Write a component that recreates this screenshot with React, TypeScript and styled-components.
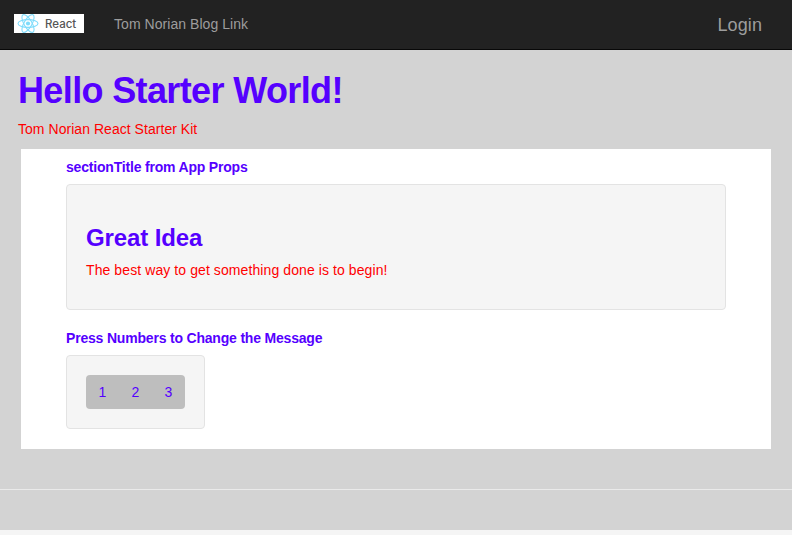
import React from "react";
import styled, { createGlobalStyle } from "styled-components";

const Global = createGlobalStyle`
  html, body { margin: 0; padding: 0; background: #f5f5f5; }
  body { font-family: "Liberation Sans", Arial, sans-serif; }
  * { box-sizing: border-box; }
`;
const Page = styled.div`
  width: 792px; height: 535px; overflow: hidden; display: flex; flex-direction: column;
`;
const Navbar = styled.nav`
  height: 50px; flex: none; background: #222; border-bottom: 1px solid #080808;
  display: flex; align-items: center; padding: 0 30px 2px 14px;
`;
const Logo = styled.div`
  width: 70px; height: 19px; background: #fff; display: flex; align-items: center; gap: 6px; padding-left: 3px;
  color: #555; font-size: 11.5px; font-weight: 500; font-family: "Inter", sans-serif;
`;
const NavLink = styled.a`
  color: #9d9d9d; font-size: 14px; margin-left: 30px; letter-spacing: 0.05px;
`;
const Login = styled.a`
  color: #9d9d9d; font-size: 18px; margin-left: auto; position: relative; top: 2px; letter-spacing: 0.1px;
`;
const Main = styled.main`
  height: 480px; flex: none; background: #d3d3d3; display: flex; flex-direction: column;
`;
const Hero = styled.h1`
  margin: 21px 0 0 18px; font-size: 36px; line-height: 40px; font-weight: 700; color: #5500ff;
  letter-spacing: -0.63px;
`;
const Tag = styled.p`
  margin: 8px 0 0 18px; font-size: 14px; line-height: 20px; color: #ff0000; letter-spacing: 0.04px;
`;
const Panel = styled.section`
  margin: 10px 0 0 21px; width: 750px; height: 300px; background: #fff; padding: 8px 45px 0;
`;
const SectionTitle = styled.h3`
  margin: 0; font-size: 14px; line-height: 20px; font-weight: 700; color: #5500ff;
  letter-spacing: -0.19px;
`;
const Well = styled.div`
  background: #f5f5f5; border: 1px solid #e3e3e3; border-radius: 4px;
`;
const MessageWell = styled(Well)`
  width: 660px; height: 126px; margin-top: 7px; padding: 19px; margin-bottom: 18px;
`;
const MessageTitle = styled.h2`
  margin: 21px 0 0; font-size: 24px; line-height: 26px; font-weight: 700; color: #5500ff;
  letter-spacing: -0.12px;
`;
const Message = styled.p`
  margin: 9px 0 0; font-size: 14px; line-height: 20px; color: #ff0000; letter-spacing: 0.09px;
`;
const ButtonWell = styled(Well)`
  width: 139px; height: 74px; margin-top: 7px; padding: 19px;
`;
const ButtonGroup = styled.div`
  width: 99px; height: 34px; background: #bebebe; border-radius: 4px; display: flex; align-items: center;
`;
const NumberButton = styled.button`
  width: 33px; border: 0; background: none; padding: 0; font: 14px "Liberation Sans", Arial, sans-serif; color: #5500ff;
`;
const Footer = styled.footer`
  margin-top: 40px; border-top: 1px solid #eaeaea; height: 41px; background: #d3d3d3;
`;

const ReactMark = () => (
  <svg width="22" height="19" viewBox="-11 -9.5 22 19" fill="none" stroke="#7fdcfb" strokeWidth="1.1">
    <circle r="2.1" fill="#7fdcfb" stroke="none" />
    <ellipse rx="10" ry="3.9" />
    <ellipse rx="10" ry="3.9" transform="rotate(60)" />
    <ellipse rx="10" ry="3.9" transform="rotate(120)" />
  </svg>
);

export default function App() {
  return (
    <Page>
      <Global />
      <Navbar>
        <Logo><ReactMark />React</Logo>
        <NavLink>Tom Norian Blog Link</NavLink>
        <Login>Login</Login>
      </Navbar>
      <Main>
        <Hero>Hello Starter World!</Hero>
        <Tag>Tom Norian React Starter Kit</Tag>
        <Panel>
          <SectionTitle>sectionTitle from App Props</SectionTitle>
          <MessageWell>
            <MessageTitle>Great Idea</MessageTitle>
            <Message>The best way to get something done is to begin!</Message>
          </MessageWell>
          <SectionTitle>Press Numbers to Change the Message</SectionTitle>
          <ButtonWell>
            <ButtonGroup>
              {[1, 2, 3].map((n) => <NumberButton key={n}>{n}</NumberButton>)}
            </ButtonGroup>
          </ButtonWell>
        </Panel>
        <Footer />
      </Main>
    </Page>
  );
}
